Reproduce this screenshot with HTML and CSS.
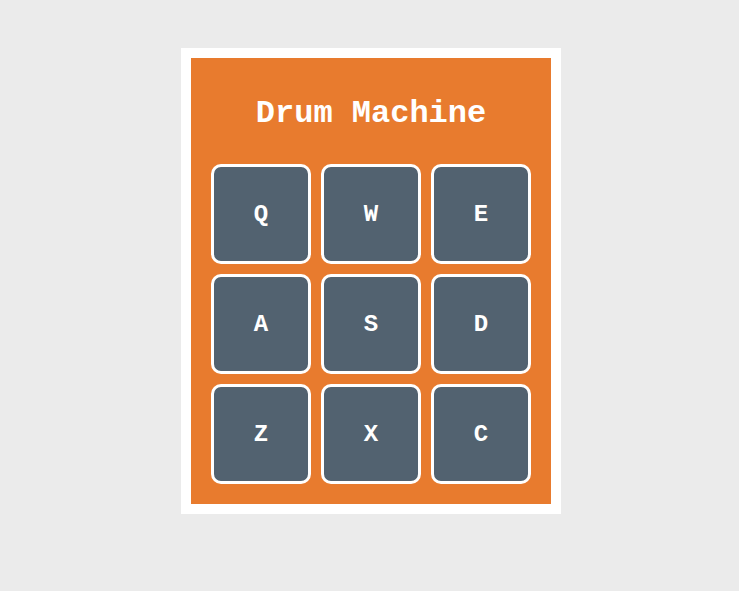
FILE: index.html
```html
<!DOCTYPE html>
<html>
<head>
<meta charset="utf-8">
<link rel="stylesheet" href="styles.css">
</head>
<body>
<div class="frame">
  <div class="machine">
    <h1 class="title">Drum Machine</h1>
    <div class="pads">
      <div class="pad">Q</div>
      <div class="pad">W</div>
      <div class="pad">E</div>
      <div class="pad">A</div>
      <div class="pad">S</div>
      <div class="pad">D</div>
      <div class="pad">Z</div>
      <div class="pad">X</div>
      <div class="pad">C</div>
    </div>
  </div>
</div>
</body>
</html>
```
FILE: styles.css
```css
html, body {
  margin: 0;
  height: 100%;
}
body {
  background: #ebebeb;
  display: flex;
  justify-content: center;
  align-items: flex-start;
  padding: 48px 0 0 3px;
  box-sizing: border-box;
  font-family: "Liberation Mono", "DejaVu Sans Mono", monospace;
}
.frame {
  background: #ffffff;
  padding: 10px;
}
.machine {
  background: #e87b2e;
  width: 360px;
  padding: 20px;
  box-sizing: border-box;
}
.title {
  margin: 0 0 20px;
  padding-top: 3px;
  height: 63px;
  line-height: 66px;
  text-align: center;
  color: #ffffff;
  font-size: 32px;
  font-weight: bold;
}
.pads {
  display: grid;
  grid-template-columns: repeat(3, 100px);
  grid-auto-rows: 100px;
  gap: 10px;
}
.pad {
  background: #526270;
  border: 3px solid #ffffff;
  border-radius: 10px;
  box-sizing: border-box;
  display: flex;
  align-items: center;
  justify-content: center;
  color: #ffffff;
  font-size: 24px;
  font-weight: bold;
}
```
